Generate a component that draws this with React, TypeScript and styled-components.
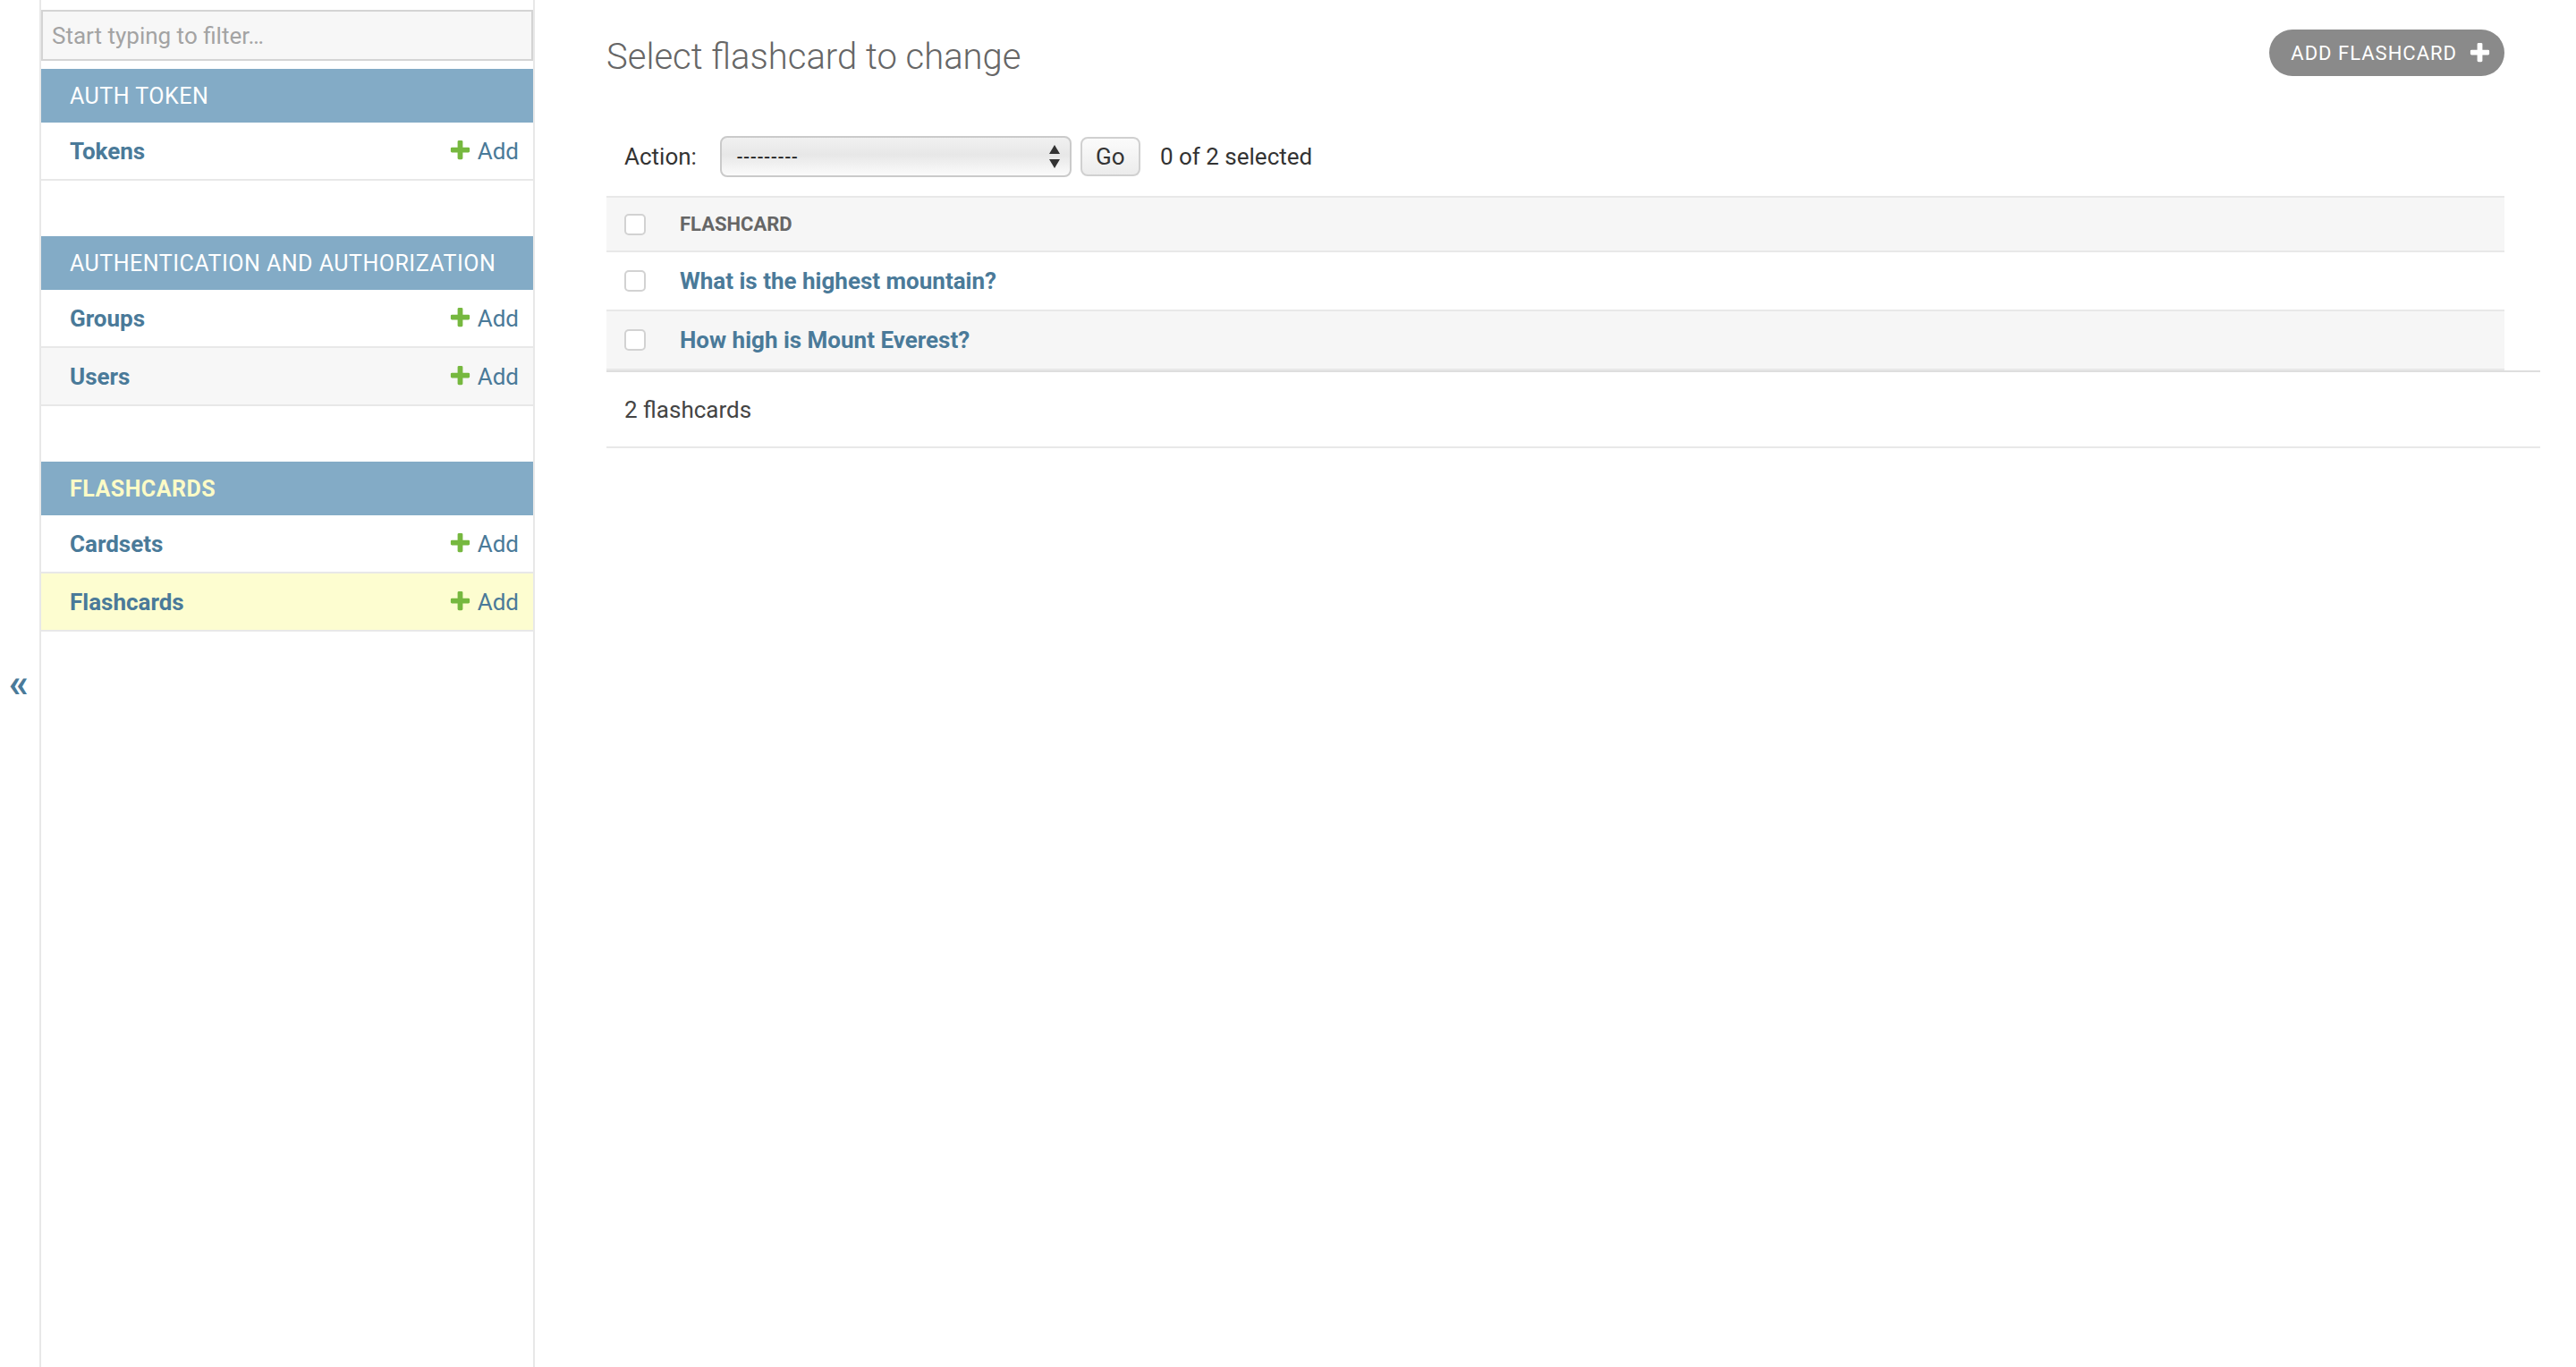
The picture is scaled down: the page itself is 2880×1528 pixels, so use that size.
import React from "react";
import styled, { createGlobalStyle } from "styled-components";

const LINK = "#4a7a99";
const BORDER = "#e8e8e8";

const GlobalStyle = createGlobalStyle`
  * {
    box-sizing: border-box;
  }
  html,
  body {
    margin: 0;
    padding: 0;
    background: #fff;
  }
  body {
    font-family: Roboto, "Liberation Sans", Arial, sans-serif;
    font-size: 26px;
    color: #333;
  }
`;

const Page = styled.div`
  display: flex;
  min-height: 100vh;
`;

const ToggleNav = styled.button`
  flex: 0 0 46px;
  height: 100vh;
  display: flex;
  align-items: center;
  justify-content: center;
  padding: 0 2px 0 0;
  border: 0;
  border-right: 2px solid ${BORDER};
  background: #fff;
  color: ${LINK};
  font-family: inherit;
  font-size: 44px;
  font-weight: 700;
  cursor: pointer;
`;

const Sidebar = styled.nav`
  flex: 0 0 552px;
  height: 100vh;
  border-right: 2px solid ${BORDER};
  background: #fff;
`;

const FilterInput = styled.input`
  display: block;
  width: 100%;
  height: 57px;
  margin: 11px 0 9px;
  padding: 0 10px;
  border: 2px solid #d4d4d4;
  background: #f7f7f7;
  font-family: inherit;
  font-size: 26px;
  color: #333;
  outline: none;

  &::placeholder {
    color: #a3a3a3;
  }
`;

const Module = styled.section`
  margin-bottom: 62px;
`;

const Caption = styled.div<{ $current?: boolean }>`
  height: 60px;
  display: flex;
  align-items: center;
  padding-left: 32px;
  background: #83abc6;
  color: ${(p) => (p.$current ? "#fcfbc6" : "#fff")};
  font-size: 25px;
  font-weight: ${(p) => (p.$current ? 700 : 400)};
  letter-spacing: 0.5px;
  text-transform: uppercase;
`;

const ModelRow = styled.div<{ $tone: "white" | "grey" | "current" }>`
  height: 65px;
  display: flex;
  align-items: center;
  justify-content: space-between;
  padding: 0 16px 0 32px;
  border-bottom: 2px solid ${BORDER};
  background: ${(p) =>
    p.$tone === "current" ? "#fdfdd0" : p.$tone === "grey" ? "#f7f7f7" : "#fff"};
`;

const ModelLink = styled.a`
  color: ${LINK};
  font-weight: 700;
  text-decoration: none;
`;

const AddLink = styled.a`
  display: flex;
  align-items: center;
  gap: 6px;
  color: ${LINK};
  text-decoration: none;
`;

const Main = styled.main`
  flex: 1;
  min-width: 0;
  padding: 0 80px;
`;

const Header = styled.div`
  display: flex;
  justify-content: space-between;
  align-items: flex-start;
  padding-top: 33px;
`;

const Title = styled.h1`
  margin: 7px 0 0;
  font-size: 40px;
  line-height: 47px;
  font-weight: 300;
  color: #666;
`;

const AddButton = styled.a`
  height: 52px;
  display: flex;
  align-items: center;
  gap: 12px;
  padding: 0 14px 0 24px;
  border-radius: 26px;
  background: #8a8a8a;
  color: #fff;
  font-size: 22px;
  letter-spacing: 1px;
  text-transform: uppercase;
  text-decoration: none;
`;

const Actions = styled.div`
  height: 88px;
  margin-top: 44px;
  display: flex;
  align-items: center;
  padding: 0 20px;
`;

const SelectBox = styled.div`
  width: 393px;
  height: 46px;
  margin-left: 26px;
  display: flex;
  align-items: center;
  justify-content: space-between;
  padding: 0 11px 0 17px;
  border: 2px solid #cacaca;
  border-radius: 8px;
  background: linear-gradient(#f1f1f1 0%, #e7e7e7 45%, #fbfbfb 100%);
  font-size: 22px;
  letter-spacing: 1.6px;
  color: #111;
`;

const GoButton = styled.button`
  width: 67px;
  height: 44px;
  margin-left: 10px;
  border: 2px solid #d0d0d0;
  border-radius: 8px;
  background: linear-gradient(#fbfbfb, #ececec);
  font-family: inherit;
  font-size: 26px;
  color: #333;
  padding: 0;
`;

const Counter = styled.span`
  margin-left: 22px;
  color: #333;
`;

const Table = styled.table`
  width: 100%;
  border-collapse: collapse;
`;

const HeadCell = styled.th`
  height: 61px;
  padding: 0;
  text-align: left;
  background: #f6f6f6;
  border-top: 2px solid ${BORDER};
  border-bottom: 2px solid ${BORDER};
  font-size: 22px;
  font-weight: 700;
  color: #666;
  text-transform: uppercase;
`;

const CheckCell = styled.td`
  width: 81px;
  padding: 0 0 0 20px;
`;

const HeadCheckCell = styled(HeadCell)`
  width: 82px;
  padding-left: 20px;
`;

const Row = styled.tr<{ $even: boolean }>`
  height: 66px;
  background: ${(p) => (p.$even ? "#f6f6f6" : "#fff")};
  border-bottom: 2px solid ${BORDER};
`;

const Cell = styled.td`
  padding: 0;
`;

const RowLink = styled.a`
  color: ${LINK};
  font-weight: 700;
  text-decoration: none;
`;

const Check = styled.input`
  appearance: none;
  display: block;
  width: 24px;
  height: 24px;
  margin: 0;
  border: 2px solid #d2d2d2;
  border-radius: 5px;
  background: #fff;
`;

const Paginator = styled.p`
  height: 87px;
  margin: 0 -40px 0 0;
  display: flex;
  align-items: center;
  padding: 0 20px;
  border-top: 2px solid #dedede;
  border-bottom: 2px solid ${BORDER};
  color: #444;
`;

const PlusIcon = ({ color, size }: { color: string; size: number }) => (
  <svg width={size} height={size} viewBox="0 0 1792 1792">
    <path
      fill={color}
      d="M1600 736v192q0 40-28 68t-68 28h-416v416q0 40-28 68t-68 28h-192q-40 0-68-28t-28-68v-416h-416q-40 0-68-28t-28-68v-192q0-40 28-68t68-28h416v-416q0-40 28-68t68-28h192q40 0 68 28t28 68v416h416q40 0 68 28t28 68z"
    />
  </svg>
);

const SelectArrows = () => (
  <svg width="12" height="26" viewBox="0 0 12 26">
    <path fill="#333" d="M6 0L12 10H0z" />
    <path fill="#333" d="M0 16h12L6 26z" />
  </svg>
);

type ModelItem = { name: string; current?: boolean };
type AppGroup = { title: string; current?: boolean; models: ModelItem[] };

const apps: AppGroup[] = [
  { title: "Auth Token", models: [{ name: "Tokens" }] },
  {
    title: "Authentication and Authorization",
    models: [{ name: "Groups" }, { name: "Users" }],
  },
  {
    title: "Flashcards",
    current: true,
    models: [{ name: "Cardsets" }, { name: "Flashcards", current: true }],
  },
];

const flashcards = ["What is the highest mountain?", "How high is Mount Everest?"];

export default function App() {
  return (
    <>
      <GlobalStyle />
      <Page>
        <ToggleNav type="button" aria-label="Toggle navigation">
          {"\u00AB"}
        </ToggleNav>

        <Sidebar>
          <FilterInput placeholder="Start typing to filter…" />
          {apps.map((app) => (
            <Module key={app.title}>
              <Caption $current={app.current}>{app.title}</Caption>
              {app.models.map((model, index) => (
                <ModelRow
                  key={model.name}
                  $tone={model.current ? "current" : index % 2 ? "grey" : "white"}
                >
                  <ModelLink href="#">{model.name}</ModelLink>
                  <AddLink href="#">
                    <PlusIcon color="#76b83f" size={27} />
                    Add
                  </AddLink>
                </ModelRow>
              ))}
            </Module>
          ))}
        </Sidebar>

        <Main>
          <Header>
            <Title>Select flashcard to change</Title>
            <AddButton href="#">
              Add flashcard
              <PlusIcon color="#fff" size={27} />
            </AddButton>
          </Header>

          <Actions>
            <span>Action:</span>
            <SelectBox>
              <span>---------</span>
              <SelectArrows />
            </SelectBox>
            <GoButton type="button">Go</GoButton>
            <Counter>0 of 2 selected</Counter>
          </Actions>

          <Table>
            <thead>
              <tr>
                <HeadCheckCell>
                  <Check type="checkbox" />
                </HeadCheckCell>
                <HeadCell>Flashcard</HeadCell>
              </tr>
            </thead>
            <tbody>
              {flashcards.map((question, index) => (
                <Row key={question} $even={index % 2 === 1}>
                  <CheckCell>
                    <Check type="checkbox" />
                  </CheckCell>
                  <Cell>
                    <RowLink href="#">{question}</RowLink>
                  </Cell>
                </Row>
              ))}
            </tbody>
          </Table>

          <Paginator>2 flashcards</Paginator>
        </Main>
      </Page>
    </>
  );
}
